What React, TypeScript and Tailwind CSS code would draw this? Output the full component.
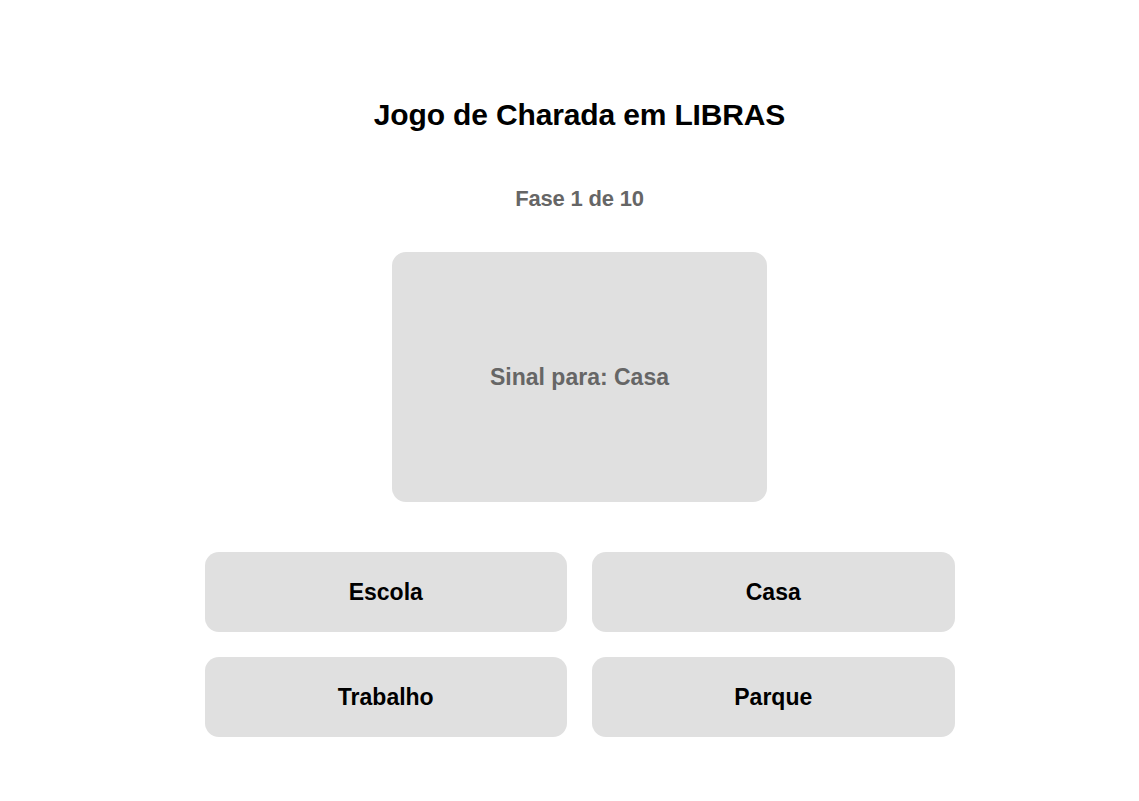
const options = ["Escola", "Casa", "Trabalho", "Parque"];

const App = () => {
  return (
    <div className="min-h-screen bg-white pl-[20px] font-['Liberation_Sans',Arial,sans-serif]">
      <div className="mx-auto flex max-w-[750px] flex-col items-center pt-[96px]">
        <h1 className="text-[30px] font-bold leading-[38px] tracking-[-0.15px] text-black">Jogo de Charada em LIBRAS</h1>
        <p className="mt-[51px] text-[22px] font-bold leading-[28px] tracking-[-0.2px] text-[#666666]">Fase 1 de 10</p>
        <div className="mt-[39px] flex h-[250px] w-[375px] items-center justify-center rounded-[14px] bg-[#e0e0e0]">
          <span className="text-[23px] font-bold text-[#666666]">Sinal para: Casa</span>
        </div>
        <div className="mt-[50px] grid w-full grid-cols-2 gap-[25px]">
          {options.map((opt) => (
            <button
              key={opt}
              className="flex h-[80px] items-center justify-center rounded-[14px] bg-[#e0e0e0] text-[23px] font-bold text-black"
            >
              {opt}
            </button>
          ))}
        </div>
      </div>
    </div>
  );
};

export default App;
